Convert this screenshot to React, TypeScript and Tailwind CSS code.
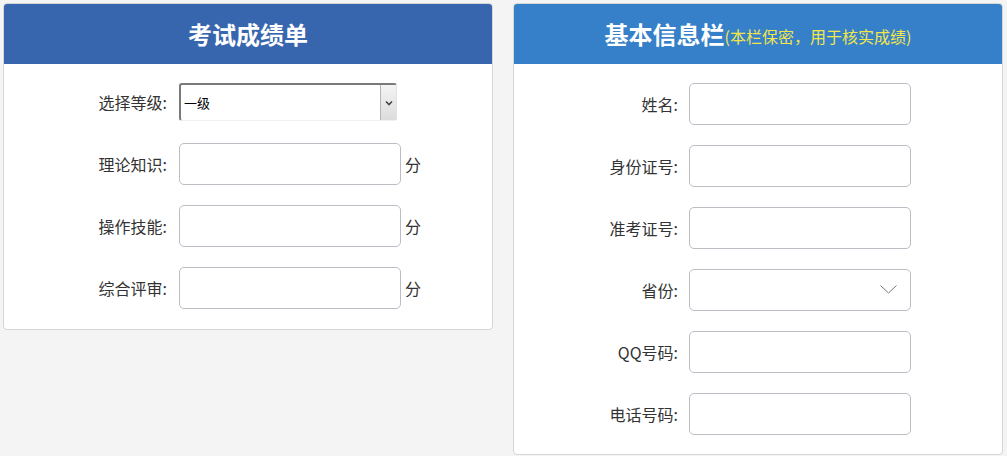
const font = { fontFamily: '"Microsoft YaHei", "Noto Sans CJK SC", "Noto Sans", sans-serif' };

const scoreRows = ["理论知识", "操作技能", "综合评审"];
const infoRows = ["姓名", "身份证号", "准考证号", "省份", "QQ号码", "电话号码"];

const App = () => {
  return (
    <div className="min-h-[456px] bg-[#f4f4f4] pt-[3px] pl-[3px] flex items-start gap-[20px]" style={font}>
      {/* 考试成绩单 */}
      <div className="w-[490px] bg-white border border-[#d6d6d6] rounded-[4px] overflow-hidden">
        <div className="h-[60px] bg-[#3866ae] flex items-center justify-center">
          <h2 className="text-white text-[24px] font-bold">考试成绩单</h2>
        </div>
        <div className="pt-[19px] pb-[20px]">
          <div className="flex items-center h-[40px]">
            <label className="w-[163px] text-right text-[16px] text-[#333] -mt-[2px]">选择等级:</label>
            <div className="ml-[12px] -mt-[2px] w-[218px] h-[38px] flex rounded-[3px] border-t-2 border-l-2 border-[#7a7a7a] border-r border-b border-r-[#e2e2e2] border-b-[#efefef] bg-white">
              <span className="flex-1 flex items-center pl-[3px] text-[13px] text-black">一级</span>
              <span className="w-[16px] border-l border-[#b4b4b4] bg-gradient-to-b from-[#f4f4f4] to-[#dcdcdc] flex items-center justify-center">
                <svg width="8" height="6" viewBox="0 0 8 6">
                  <path d="M1 1.5 L4 4.5 L7 1.5" stroke="#444" strokeWidth="1.6" fill="none" />
                </svg>
              </span>
            </div>
          </div>
          {scoreRows.map((r) => (
            <div key={r} className="flex items-center h-[42px] mt-[20px]">
              <label className="w-[163px] text-right text-[16px] text-[#333]">{r}:</label>
              <input className="ml-[12px] w-[222px] h-[42px] border border-[#bcbcc4] rounded-[5px] bg-white outline-none" />
              <span className="ml-[4px] text-[16px] text-[#333]">分</span>
            </div>
          ))}
        </div>
      </div>

      {/* 基本信息栏 */}
      <div className="w-[490px] bg-white border border-[#d6d6d6] rounded-[4px] overflow-hidden">
        <div className="h-[60px] bg-[#3580c9] flex items-center justify-center">
          <h2 className="text-white text-[24px] font-bold">基本信息栏</h2>
          <span className="text-[#f3e64a] text-[16px] mt-[4px]">(本栏保密，用于核实成绩)</span>
        </div>
        <div className="pt-[19px] pb-[19px] flex flex-col gap-[20px]">
          {infoRows.map((r) => (
            <div key={r} className="flex items-center h-[42px]">
              <label className="w-[164px] text-right text-[16px] text-[#333]">{r}:</label>
              <div className="ml-[11px] relative">
                <input className="w-[222px] h-[42px] border border-[#bcbcc4] rounded-[5px] bg-white outline-none" />
                {r === "省份" && (
                  <svg
                    className="absolute right-[14px] top-[16px]"
                    width="17"
                    height="9"
                    viewBox="0 0 17 9"
                  >
                    <path d="M0.5 0.5 L8.5 8 L16.5 0.5" stroke="#777" strokeWidth="1" fill="none" />
                  </svg>
                )}
              </div>
            </div>
          ))}
        </div>
      </div>
    </div>
  );
};

export default App;
